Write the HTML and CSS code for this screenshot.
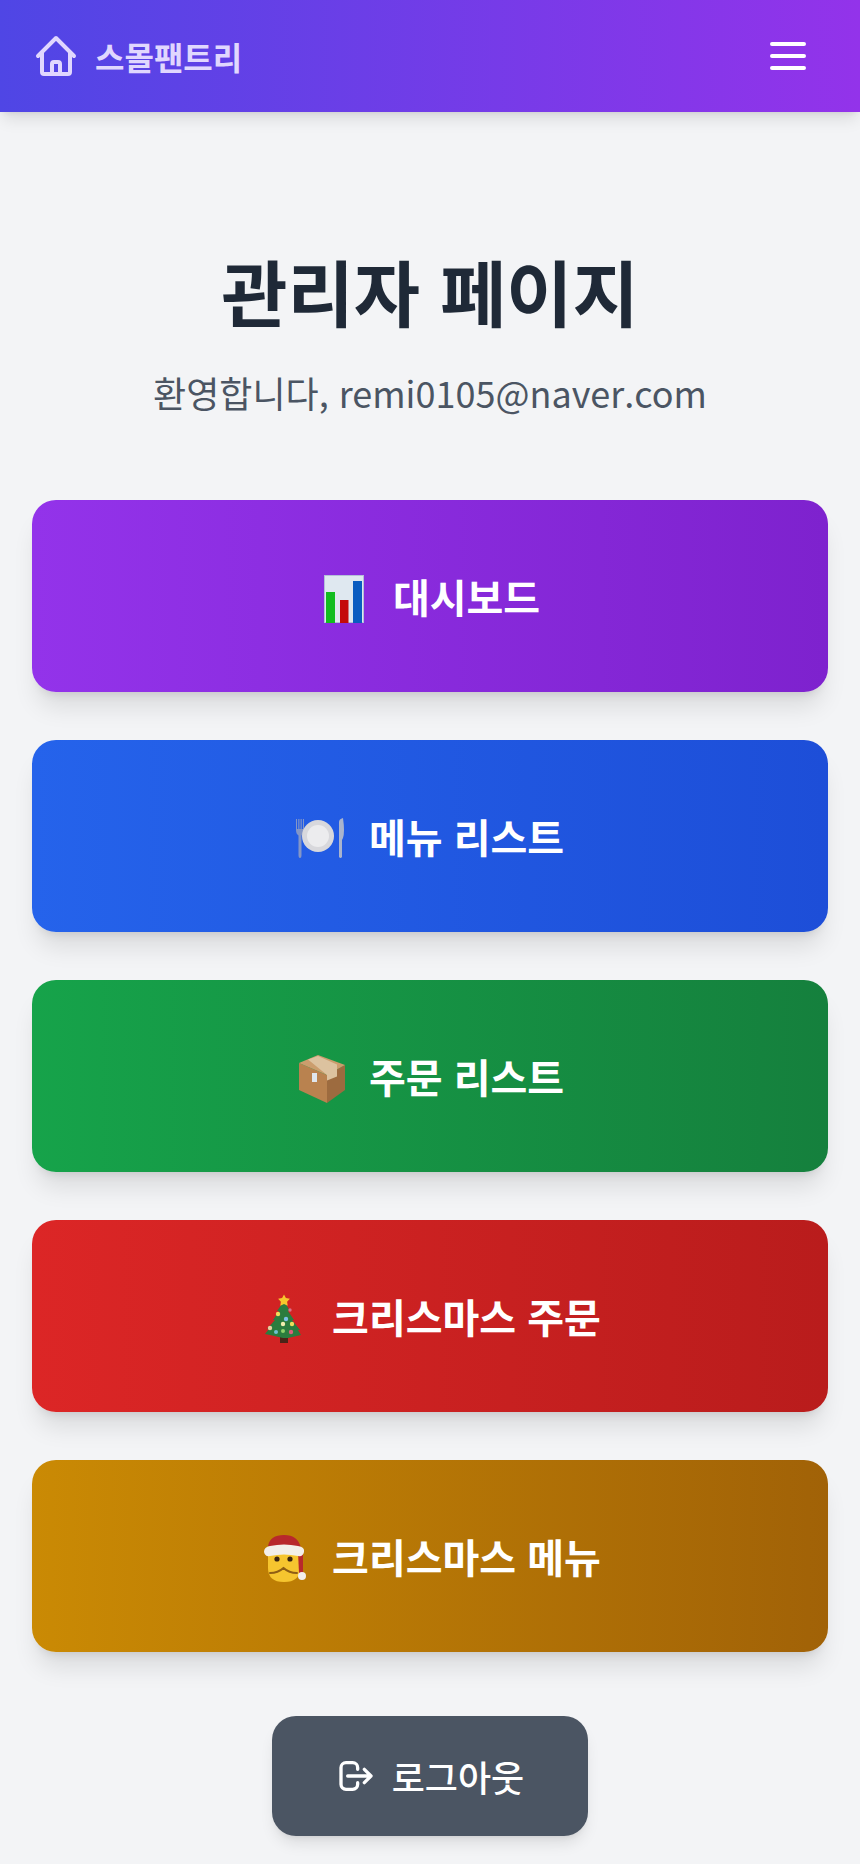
FILE: index.html
```html
<!DOCTYPE html>
<html lang="ko">
<head>
    <meta charset="UTF-8">
    <title>관리자 페이지</title>
    <link rel="stylesheet" href="styles.css">
</head>
<body>
    <nav class="navbar">
        <a class="brand" href="#">
            <svg class="brand-icon" viewBox="0 0 24 24" fill="none" stroke="currentColor" stroke-width="2" stroke-linecap="round" stroke-linejoin="round">
                <path d="M3 12l2-2m0 0l7-7 7 7M5 10v10a1 1 0 001 1h3m10-11l2 2m-2-2v10a1 1 0 01-1 1h-3m-6 0a1 1 0 001-1v-4a1 1 0 011-1h2a1 1 0 011 1v4a1 1 0 001 1m-6 0h6"/>
            </svg>
            <span>스몰팬트리</span>
        </a>
        <button class="menu-btn">
            <svg viewBox="0 0 24 24" fill="none" stroke="currentColor" stroke-width="2" stroke-linecap="round">
                <path d="M4 6h16M4 12h16M4 18h16"/>
            </svg>
        </button>
    </nav>

    <main class="content">
        <h1 class="title">관리자 페이지</h1>
        <p class="welcome">환영합니다, remi0105@naver.com</p>

        <div class="actions">
            <a class="action purple" href="#">
                <svg class="emoji" viewBox="0 0 50 50">
                    <rect x="4.500" y="1.500" width="39" height="47" fill="#dfe8f0" stroke="#b4bfd8"/>
                    <rect x="6" y="18" width="9" height="31" fill="#12bd1f"/>
                    <rect x="20" y="26" width="8.500" height="23" fill="#c40a0a"/>
                    <rect x="33" y="7" width="9" height="42" fill="#0a5cc0"/>
                </svg>
                <span>대시보드</span>
            </a>
            <a class="action blue" href="#">
                <svg class="emoji" viewBox="0 0 50 50">
                    <path d="M0 5v11q0 4 2.500 5.500V41q0 3 1.500 3t1.500-3V21.500Q8 20 8 16V5H7v10H5.700V5H4.600v10H3.400V5H2.300v10H1V5z" fill="#8496c6"/>
                    <circle cx="22" cy="22" r="16" fill="#d8d8dc"/>
                    <circle cx="22" cy="22" r="11" fill="#ececee"/>
                    <path d="M43 43V8q0-3 4-4 2 14 0 20l-1 2v17q-1.500 2-3 0z" fill="#a9b4cd"/>
                </svg>
                <span>메뉴 리스트</span>
            </a>
            <a class="action green" href="#">
                <svg class="emoji" viewBox="0 0 50 50">
                    <path d="M3 9l28 12v28L3 36z" fill="#b9824f"/>
                    <path d="M31 21l18-10v25L31 49z" fill="#9d6b3f"/>
                    <path d="M3 9L22 1l27 10-18 10z" fill="#cb9d6d"/>
                    <path d="M12 5.500L22 2l19 8.500v12l-10 4V21z" fill="#dcc29f"/>
                    <rect x="16" y="19" width="5" height="9" fill="#dfe6ee"/>
                </svg>
                <span>주문 리스트</span>
            </a>
            <a class="action red" href="#">
                <svg class="emoji" viewBox="0 0 50 50">
                    <rect x="21" y="42" width="8" height="7" fill="#4a2418"/>
                    <path d="M25 7l6 10-2 0 6 9-2 0 8 10-2 0 3 5-13 3-5 0-13-3-5-1 4-5-2 0 8-9-2 0 6-9-2 0z" fill="#2b7c3e"/>
                    <path d="M25 .500l1.900 3.600 4 .700-2.800 2.900.6 4-3.700-1.800-3.700 1.800.6-4-2.800-2.900 4-.700z" fill="#f6c62d"/>
                    <circle cx="19" cy="20" r="2.200" fill="#eedc5c"/>
                    <circle cx="31" cy="16" r="1.700" fill="#d9708a"/>
                    <circle cx="27" cy="25" r="2.200" fill="#7cc0e8"/>
                    <circle cx="24" cy="30" r="2.200" fill="#f2eeb0"/>
                    <circle cx="33" cy="30" r="2.200" fill="#eedc5c"/>
                    <circle cx="11" cy="34" r="2.200" fill="#e8d0a0"/>
                    <circle cx="17" cy="38" r="2" fill="#6fc0d0"/>
                    <circle cx="24" cy="37" r="2" fill="#8fd06a"/>
                    <circle cx="32" cy="38" r="2.200" fill="#d9607a"/>
                </svg>
                <span>크리스마스 주문</span>
            </a>
            <a class="action amber" href="#">
                <svg class="emoji" viewBox="0 0 50 50">
                    <path d="M9 18h32v16q0 14-16 14T9 34z" fill="#f6c52f"/>
                    <path d="M39 18h5v21h-4z" fill="#b8282c"/>
                    <path d="M9 12q2-11 16-11 14 0 17 13z" fill="#b8282c"/>
                    <path d="M5 18q0-5 6-6 14-3 28 0 7 1 6 6-1 5-6 4-14-3-28 0-5 1-6-4z" fill="#f3efe9"/>
                    <circle cx="18" cy="25" r="2.600" fill="#3b2410"/>
                    <circle cx="31" cy="25" r="2.600" fill="#3b2410"/>
                    <path d="M11 39q8 0 13.500-5 5.500 5 13.500 5" fill="none" stroke="#8f5e14" stroke-width="2" stroke-linecap="round"/>
                    <circle cx="43" cy="42" r="4" fill="#f3efe9"/>
                </svg>
                <span>크리스마스 메뉴</span>
            </a>
        </div>

        <button class="logout">
            <svg viewBox="0 0 24 24" fill="none" stroke="currentColor" stroke-width="2" stroke-linecap="round" stroke-linejoin="round">
                <path d="M17 16l4-4m0 0l-4-4m4 4H7m6 4v1a3 3 0 01-3 3H6a3 3 0 01-3-3V7a3 3 0 013-3h4a3 3 0 013 3v1"/>
            </svg>
            <span>로그아웃</span>
        </button>
    </main>
</body>
</html>
```

FILE: styles.css
```css
* {
    margin: 0;
    padding: 0;
    box-sizing: border-box;
}

body {
    font-family: "Noto Sans CJK KR", "Noto Sans", sans-serif;
    background-color: #f3f4f6;
    min-height: 1864px;
}

.navbar {
    height: 112px;
    padding: 0 48px 0 32px;
    display: flex;
    justify-content: space-between;
    align-items: center;
    background: linear-gradient(90deg, #4f46e5, #9333ea);
    box-shadow: 0 10px 15px -3px rgba(0, 0, 0, 0.1), 0 4px 6px -4px rgba(0, 0, 0, 0.1);
}

.brand {
    display: flex;
    align-items: center;
    gap: 15px;
    color: #e0d7fe;
    text-decoration: none;
    font-size: 32px;
    font-weight: 700;
}

.brand-icon {
    width: 48px;
    height: 48px;
}

.menu-btn {
    width: 48px;
    height: 48px;
    background: none;
    border: none;
    color: #fff;
}

.content {
    padding: 128px 32px 0;
    text-align: center;
}

.title {
    font-size: 72px;
    line-height: 100px;
    font-weight: 700;
    color: #1f2937;
}

.welcome {
    margin-top: 32px;
    font-size: 36px;
    line-height: 40px;
    color: #4b5563;
}

.actions {
    margin-top: 88px;
    display: flex;
    flex-direction: column;
    gap: 48px;
}

.action {
    height: 192px;
    display: flex;
    justify-content: center;
    align-items: center;
    gap: 23px;
    border-radius: 24px;
    color: #fff;
    text-decoration: none;
    font-size: 40px;
    font-weight: 700;
    box-shadow: 0 20px 25px -5px rgba(0, 0, 0, 0.1), 0 8px 10px -6px rgba(0, 0, 0, 0.1);
}

.emoji {
    width: 50px;
    height: 50px;
    margin-top: 6px;
    flex-shrink: 0;
}

.purple { background: linear-gradient(90deg, #9333ea, #7e22ce); }
.blue { background: linear-gradient(90deg, #2563eb, #1d4ed8); }
.green { background: linear-gradient(90deg, #16a34a, #15803d); }
.red { background: linear-gradient(90deg, #dc2626, #b91c1c); }
.amber { background: linear-gradient(90deg, #ca8a04, #a16207); }

.logout {
    margin-top: 64px;
    width: 316px;
    height: 120px;
    display: inline-flex;
    justify-content: center;
    align-items: center;
    gap: 16px;
    border: none;
    border-radius: 24px;
    background-color: #4b5563;
    color: #fff;
    font-family: inherit;
    font-size: 36px;
    font-weight: 500;
    box-shadow: 0 10px 15px -3px rgba(0, 0, 0, 0.1), 0 4px 6px -4px rgba(0, 0, 0, 0.1);
}

.logout svg {
    width: 40px;
    height: 40px;
}
```
